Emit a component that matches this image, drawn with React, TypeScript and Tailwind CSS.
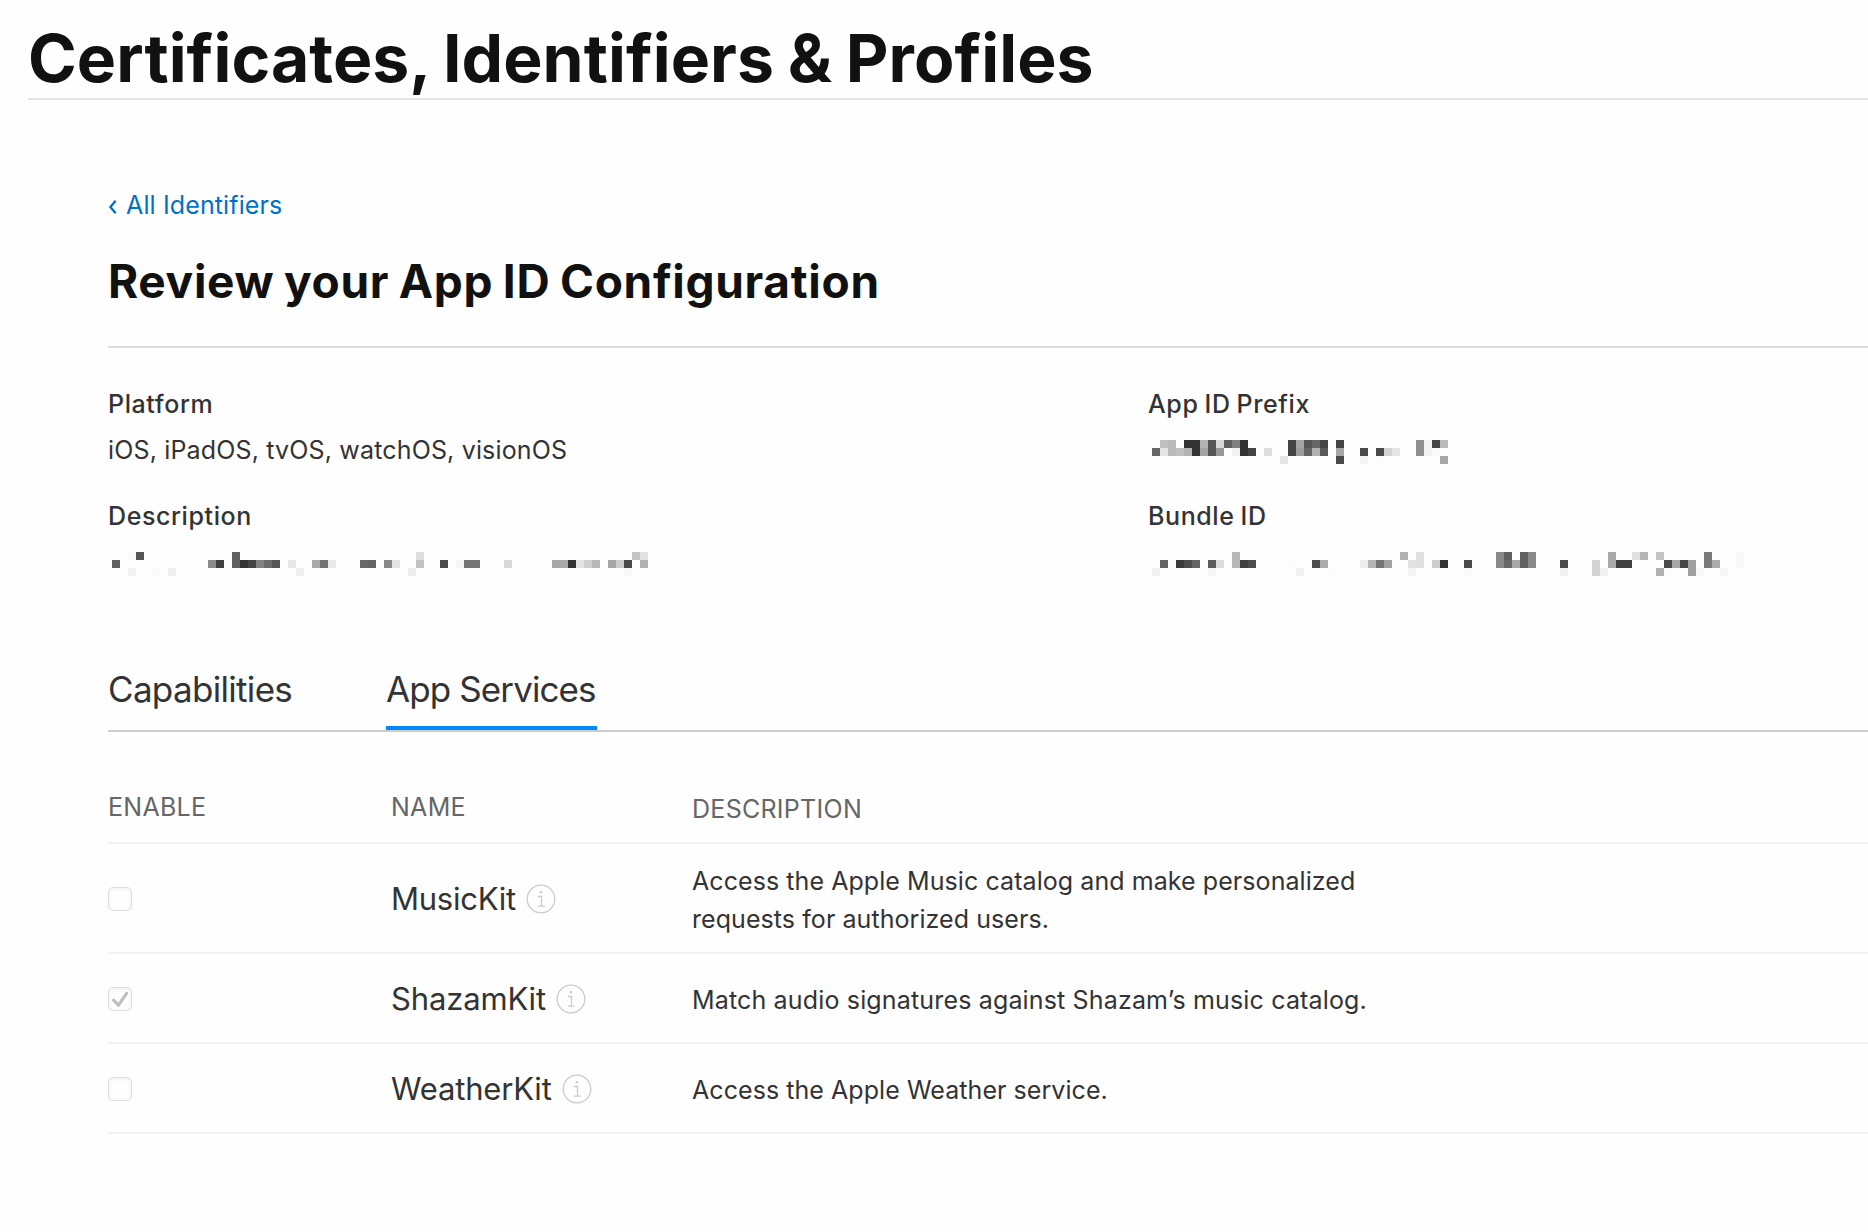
import type { ReactNode } from "react";

type Cell = [column: number, color: string];

const CELL = 8;

const prefixMosaic: Cell[][] = [
  [
    [1, "#bfbfbf"], [2, "#bbb"], [4, "#333"], [5, "#333"], [6, "#b2b2b2"], [7, "#555"], [8, "#d9d9d9"],
    [9, "#606060"], [10, "#808080"], [11, "#333"], [17, "#444"], [18, "#a4a4a4"], [19, "#555"], [20, "#666"],
    [21, "#444"], [23, "#444"], [33, "#8f8f8f"], [34, "#f2f2f2"], [35, "#444"], [36, "#bbb"],
  ],
  [
    [0, "#666"], [1, "#e6e6e6"], [2, "#bbb"], [3, "#bfbfbf"], [4, "#b2b2b2"], [5, "#333"], [6, "#a4a4a4"],
    [7, "#555"], [8, "#999"], [10, "#f2f2f2"], [11, "#333"], [12, "#444"], [14, "#dedede"], [17, "#444"],
    [18, "#9c9c9c"], [19, "#646464"], [20, "#b0b0b0"], [21, "#585858"], [23, "#a8a8a8"], [26, "#4a4a4a"],
    [28, "#4a4a4a"], [29, "#d2d2d2"], [30, "#e6e6e6"], [31, "#fdfdfd"], [33, "#8f8f8f"], [34, "#f2f2f2"],
    [35, "#fafafa"],
  ],
  [[16, "#e5e5e5"], [23, "#4a4a4a"], [26, "#f4f4f4"], [28, "#fbfbfb"], [36, "#a8a8a8"]],
];

const descriptionMosaic: Cell[][] = [
  [[2, "#f9f9f9"], [3, "#555"], [15, "#606060"], [38, "#ddd"], [65, "#c4c4c4"], [66, "#e2e2e2"]],
  [
    [0, "#606060"], [12, "#8c8c8c"], [13, "#404040"], [15, "#606060"], [16, "#343434"], [17, "#444"],
    [18, "#828282"], [19, "#6c6c6c"], [20, "#545454"], [22, "#e8e8e8"], [25, "#aaa"], [26, "#727272"],
    [27, "#e9e9e9"], [31, "#686868"], [32, "#646464"], [34, "#888"], [35, "#e4e4e4"], [38, "#c2c2c2"],
    [41, "#4a4a4a"], [43, "#f6f6f6"], [44, "#757575"], [45, "#757575"], [49, "#d9d9d9"], [55, "#a7a7a7"],
    [56, "#aaa"], [57, "#343434"], [58, "#e4e4e4"], [59, "#cfcfcf"], [60, "#b8b8b8"], [62, "#a5a5a5"],
    [63, "#ccc"], [64, "#4a4a4a"], [66, "#b0b0b0"],
  ],
  [
    [2, "#f3f3f3"], [5, "#fafafa"], [7, "#eee"], [23, "#efefef"], [33, "#fdfdfd"], [37, "#ededed"],
    [41, "#fdfdfd"], [64, "#f8f8f8"],
  ],
];

const bundleMosaic: Cell[][] = [
  [
    [10, "#b8b8b8"], [31, "#b0b0b0"], [32, "#fdfdfd"], [33, "#dfdfdf"], [43, "#8a8a8a"], [44, "#606060"],
    [46, "#606060"], [47, "#8a8a8a"], [57, "#aaa"], [60, "#e0e0e0"], [61, "#b4b4b4"], [63, "#c4c4c4"],
    [69, "#7a7a7a"], [73, "#f8f8f8"],
  ],
  [
    [1, "#646464"], [3, "#3a3a3a"], [4, "#4e4e4e"], [5, "#646464"], [7, "#5c5c5c"], [8, "#dcdcdc"],
    [10, "#b8b8b8"], [11, "#404040"], [12, "#4e4e4e"], [17, "#fcfcfc"], [20, "#4e4e4e"], [21, "#acacac"],
    [26, "#ececec"], [27, "#b4b4b4"], [28, "#757575"], [29, "#a2a2a2"], [32, "#e2e2e2"], [33, "#dfdfdf"],
    [35, "#ccc"], [36, "#333"], [37, "#fdfdfd"], [39, "#4a4a4a"], [43, "#8a8a8a"], [44, "#686868"],
    [45, "#a7a7a7"], [46, "#606060"], [47, "#8a8a8a"], [51, "#4a4a4a"], [55, "#d2d2d2"], [57, "#aaa"],
    [58, "#404040"], [59, "#404040"], [60, "#fdfdfd"], [64, "#4a4a4a"], [65, "#a8a8a8"], [66, "#464646"],
    [67, "#a0a0a0"], [69, "#7a7a7a"], [70, "#acacac"], [73, "#f8f8f8"],
  ],
  [
    [0, "#f1f1f1"], [2, "#fdfdfd"], [6, "#fdfdfd"], [7, "#f7f7f7"], [10, "#fdfdfd"], [18, "#f0f0f0"],
    [22, "#fbfbfb"], [32, "#f4f4f4"], [39, "#fafafa"], [51, "#f0f0f0"], [55, "#d2d2d2"], [56, "#f0f0f0"],
    [63, "#b0b0b0"], [64, "#fcfcfc"], [67, "#a0a0a0"], [68, "#f8f8f8"], [71, "#f6f6f6"],
  ],
];

/* Pixelated stand-in for a redacted value. */
function Mosaic({ rows }: { rows: Cell[][] }) {
  return (
    <svg className="ml-1 block" width={75 * CELL} height={3 * CELL} shapeRendering="crispEdges" aria-label="Redacted">
      {rows.map((row, y) =>
        row.map(([x, color]) => (
          <rect key={`${x}-${y}`} x={x * CELL} y={y * CELL} width={CELL} height={CELL} fill={color} />
        )),
      )}
    </svg>
  );
}

function Label({ children }: { children: ReactNode }) {
  return (
    <dt className="h-8 text-[25px] leading-8 font-medium tracking-[0.6px] [word-spacing:-1.2px]">{children}</dt>
  );
}

function InfoIcon() {
  return (
    <svg width="30" height="30" viewBox="0 0 30 30" fill="none" stroke="#cccccc" aria-hidden="true">
      <circle cx="15" cy="15" r="13.8" strokeWidth="1.3" />
      <path d="M12 12.5h3.5v9.7M11.8 22.2h7" strokeWidth="1.3" />
      <circle cx="15" cy="8.2" r="1.3" fill="#cccccc" stroke="none" />
    </svg>
  );
}

function Checkbox({ checked }: { checked: boolean }) {
  return (
    <span
      role="checkbox"
      aria-checked={checked}
      aria-disabled="true"
      className="flex size-6 items-center justify-center rounded-[5px] border border-[#dedede] shadow-[inset_0_1px_4px_rgba(0,0,0,0.07)]"
    >
      {checked && (
        <svg width="22" height="22" viewBox="0 0 22 22" fill="none" stroke="#bfbfbf" strokeWidth="3.2" aria-hidden="true">
          <path d="M4.6 12.2l4.9 5L17.6 5.4" strokeLinecap="round" strokeLinejoin="round" />
        </svg>
      )}
    </span>
  );
}

interface Service {
  name: string;
  tracking: string;
  description: ReactNode;
  descriptionClass: string;
  rowHeight: string;
  checked: boolean;
}

const services: Service[] = [
  {
    name: "MusicKit",
    tracking: "tracking-[-0.25px]",
    description: (
      <>
        Access the Apple Music catalog and make personalized
        <br />
        requests for authorized users.
      </>
    ),
    descriptionClass: "pt-1 tracking-[0.07px]",
    rowHeight: "h-[110px]",
    checked: false,
  },
  {
    name: "ShazamKit",
    tracking: "tracking-[-0.15px]",
    description: "Match audio signatures against Shazam’s music catalog.",
    descriptionClass: "pt-1 tracking-[0.16px]",
    rowHeight: "h-[90px]",
    checked: true,
  },
  {
    name: "WeatherKit",
    tracking: "tracking-[-0.18px]",
    description: "Access the Apple Weather service.",
    descriptionClass: "pt-1 tracking-[0.06px]",
    rowHeight: "h-[90px]",
    checked: false,
  },
];

export default function App() {
  return (
    <div className="min-h-[1232px] overflow-hidden bg-[#fefefe] font-[Inter,sans-serif] text-[#333333]">
      <header className="ml-7 border-b-2 border-[#e3e3e3] pt-[18px]">
        <h1 className="text-[66px] leading-[80px] font-bold tracking-[0.05px] whitespace-nowrap text-[#111111] [word-spacing:-2px]">
          Certificates, Identifiers &amp; Profiles
        </h1>
      </header>

      <main className="ml-[108px] pt-[89px]">
        <a className="flex h-8 items-center text-[25px] leading-8 tracking-[0.13px] text-[#0070c9]">
          <svg className="mt-1 mr-2" width="10" height="16" viewBox="0 0 10 16" fill="none" stroke="#0070c9" strokeWidth="2.3" aria-hidden="true">
            <path d="M7.6 1.8L2.4 8l5.2 6.2" />
          </svg>
          All Identifiers
        </a>

        <h2 className="mt-8 border-b-2 border-[#dddddd] pb-[37px] text-[46px] leading-[56px] font-bold tracking-[0.7px] whitespace-nowrap text-[#111111] [word-spacing:-2px]">
          Review your App ID Configuration
        </h2>

        <dl className="mt-10 grid grid-cols-[1040px_1fr]">
          <div>
            <Label>Platform</Label>
            <dd className="mt-3.5 mb-[34px] h-8 text-[25px] leading-8 tracking-[0.16px]">
              iOS, iPadOS, tvOS, watchOS, visionOS
            </dd>
            <Label>Description</Label>
            <dd className="mt-5">
              <Mosaic rows={descriptionMosaic} />
            </dd>
          </div>
          <div>
            <Label>App ID Prefix</Label>
            <dd className="mt-5 mb-9">
              <Mosaic rows={prefixMosaic} />
            </dd>
            <Label>Bundle ID</Label>
            <dd className="mt-5">
              <Mosaic rows={bundleMosaic} />
            </dd>
          </div>
        </dl>

        <nav className="mt-[92px] flex h-16 border-b-2 border-[#cccccc] text-[35px] leading-[42px]">
          <a className="w-[278px] tracking-[-0.68px]">Capabilities</a>
          <a className="w-[211px] border-b-4 border-[#0088ff] tracking-[-0.9px] whitespace-nowrap">App Services</a>
        </nav>

        <section>
          <div className="grid h-28 grid-cols-[283px_301px_1fr] border-b-2 border-[#f2f2f2] pt-[59px] text-[25px] leading-8 tracking-[0.28px] text-[#666666]">
            <div>ENABLE</div>
            <div>NAME</div>
            <div className="pt-0.5">DESCRIPTION</div>
          </div>
          {services.map((service) => (
            <div
              key={service.name}
              className={`grid grid-cols-[283px_301px_1fr] items-center border-b-2 border-[#f2f2f2] ${service.rowHeight}`}
            >
              <div className="pt-0.5">
                <Checkbox checked={service.checked} />
              </div>
              <div className="flex items-center gap-2.5 pt-0.5">
                <span className={`text-[31px] leading-9 ${service.tracking}`}>{service.name}</span>
                <InfoIcon />
              </div>
              <p className={`text-[25px] leading-[38px] ${service.descriptionClass}`}>{service.description}</p>
            </div>
          ))}
        </section>
      </main>
    </div>
  );
}
